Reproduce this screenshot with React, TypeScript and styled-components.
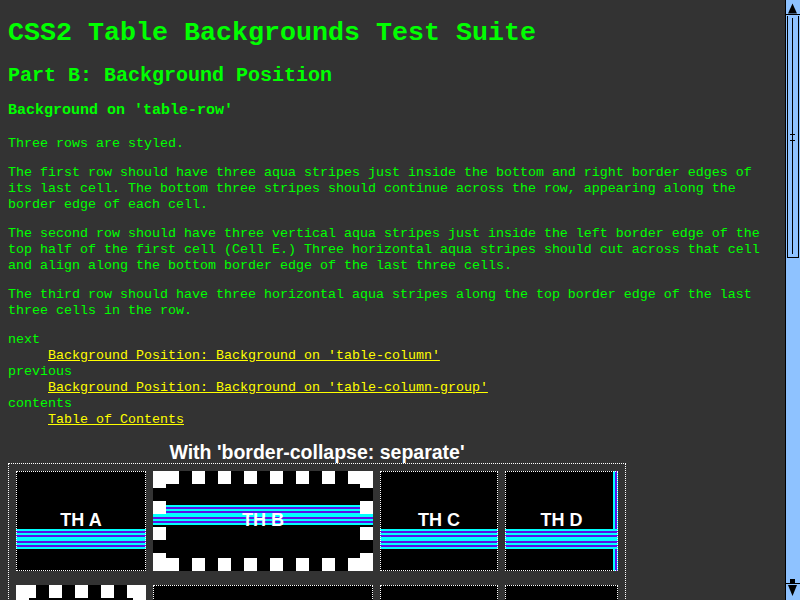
import React from 'react';
import styled, { createGlobalStyle } from 'styled-components';

const AQUA = '#00ffff';
const VIOLET = '#5c10e8';

const band = (dir: string) =>
  `linear-gradient(${dir}, ${AQUA} 0 2px, ${VIOLET} 2px 4px, ${AQUA} 4px 6px, ${VIOLET} 6px 8px, ${AQUA} 8px 12px, ${VIOLET} 12px 14px, ${AQUA} 14px 16px, ${VIOLET} 16px 18px, ${AQUA} 18px 20px)`;

type StripeKind = 'none' | 'low' | 'high' | 'corner';

const stripeLayers: Record<StripeKind, { image: string; size: string; pos: string }> = {
  none: { image: 'none', size: 'auto', pos: '0 0' },
  low: { image: band('to bottom'), size: '100% 20px', pos: '0 58px' },
  high: { image: band('to bottom'), size: '100% 20px', pos: '0 34px' },
  corner: {
    image: `${band('to bottom')}, ${band('to right')}`,
    size: '100% 20px, 20px 100%',
    pos: '0 58px, 108px 0',
  },
};

const GlobalStyle = createGlobalStyle`
  html, body {
    margin: 0;
    padding: 0;
    background: #333333;
    overflow: hidden;
  }
`;

const Screen = styled.div`
  display: flex;
  width: 800px;
  height: 600px;
  overflow: hidden;
  background: #333333;
`;

const Page = styled.main`
  flex: 1;
  min-width: 0;
  height: 600px;
  overflow: hidden;
  box-sizing: border-box;
  padding: 0 16px 0 8px;
  color: #00ff00;
  font-family: "Liberation Mono", "Courier New", monospace;
  font-size: 13.333px;
`;

const Title = styled.h1`
  font-size: 26.667px;
  line-height: 30px;
  font-weight: bold;
  margin: 18px 0 16px;
`;

const Subtitle = styled.h2`
  font-size: 20px;
  line-height: 23px;
  font-weight: bold;
  margin: 16px 0 15px;
`;

const Section = styled.h3`
  font-size: 15px;
  line-height: 18px;
  font-weight: bold;
  margin: 15px 0 15.5px;
`;

const Para = styled.p`
  line-height: 16px;
  margin: 13px 0;
`;

const Nav = styled.dl`
  line-height: 16px;
  margin: 13px 0;
`;

const NavTerm = styled.dt`
  margin: 0;
`;

const NavItem = styled.dd`
  margin: 0 0 0 40px;
`;

const Link = styled.a`
  color: #ffff00;
  text-decoration: underline;
`;

const TableBlock = styled.div`
  display: flex;
  flex-direction: column;
  width: fit-content;
`;

const Caption = styled.div`
  text-align: center;
  color: #ffffff;
  font-family: "Liberation Sans", Arial, sans-serif;
  font-weight: bold;
  font-size: 19.5px;
  line-height: 22px;
`;

const Table = styled.div`
  display: grid;
  grid-template-columns: 130px 220px 118px 113px;
  column-gap: 7px;
  row-gap: 14px;
  padding: 7px;
  border: 1px dotted #ffffff;
`;

const Cell = styled.div<{ $dotted?: boolean; $stripes: StripeKind }>`
  position: relative;
  box-sizing: border-box;
  height: 100px;
  display: flex;
  align-items: center;
  justify-content: center;
  background-color: #000000;
  border: ${(p) => (p.$dotted ? '1px dotted #ffffff' : 'none')};
  background-origin: border-box;
  background-repeat: no-repeat;
  background-image: ${(p) => stripeLayers[p.$stripes].image};
  background-size: ${(p) => stripeLayers[p.$stripes].size};
  background-position: ${(p) => stripeLayers[p.$stripes].pos};
`;

const Label = styled.span`
  position: relative;
  color: #ffffff;
  font-family: "Liberation Sans", Arial, sans-serif;
  font-weight: bold;
  font-size: 18px;
`;

const FrameSvg = styled.svg`
  position: absolute;
  inset: 0;
  pointer-events: none;
`;

type R = [number, number, number, number];

const framesB: R[] = [
  [0, 0, 26, 13], [39, 0, 13, 13], [65, 0, 13, 13], [91, 0, 13, 13], [117, 0, 13, 13],
  [143, 0, 13, 13], [169, 0, 13, 13], [195, 0, 25, 13],
  [0, 87, 26, 13], [39, 87, 13, 13], [65, 87, 13, 13], [91, 87, 13, 13], [117, 87, 13, 13],
  [143, 87, 13, 13], [169, 87, 13, 13], [195, 87, 25, 13],
  [0, 0, 13, 17], [0, 30, 13, 13], [0, 56, 13, 13], [0, 82, 13, 18],
  [207, 0, 13, 17], [207, 30, 13, 13], [207, 56, 13, 13], [207, 82, 13, 18],
];

const framesE: R[] = [
  [0, 0, 20, 13], [33, 0, 13, 13], [59, 0, 13, 13], [85, 0, 13, 13], [111, 0, 19, 13],
  [0, 87, 20, 13], [33, 87, 13, 13], [59, 87, 13, 13], [85, 87, 13, 13], [111, 87, 19, 13],
  [0, 0, 13, 17], [0, 30, 13, 13], [0, 56, 13, 13], [0, 82, 13, 18],
  [117, 0, 13, 17], [117, 30, 13, 13], [117, 56, 13, 13], [117, 82, 13, 18],
];

const SquareFrame: React.FC<{ w: number; h: number; rects: R[] }> = ({ w, h, rects }) => (
  <FrameSvg width={w} height={h} viewBox={`0 0 ${w} ${h}`} aria-hidden="true">
    {rects.map(([x, y, rw, rh], i) => (
      <rect key={i} x={x} y={y} width={rw} height={rh} fill="#ffffff" />
    ))}
  </FrameSvg>
);

/* Scrollbar */
const Scrollbar = styled.div`
  flex: none;
  width: 14px;
  height: 600px;
  border-left: 1px solid #000000;
  background: #8ec2ff;
  display: flex;
  flex-direction: column;
`;

const UpButton = styled.div`
  height: 14px;
  border-bottom: 1px solid #000000;
  display: flex;
`;

const Thumb = styled.div`
  margin: 1px 1px 0 1px;
  height: 241px;
  border: 1px solid #000000;
  border-top: none;
  display: flex;
`;

const TrackRest = styled.div`
  flex: 1;
`;

const DownButton = styled.div`
  height: 21px;
  display: flex;
`;

export default function App() {
  return (
    <>
      <GlobalStyle />
      <Screen>
        <Page>
          <Title>CSS2 Table Backgrounds Test Suite</Title>
          <Subtitle>Part B: Background Position</Subtitle>
          <Section>Background on 'table-row'</Section>
          <Para>Three rows are styled.</Para>
          <Para>
            The first row should have three aqua stripes just inside the bottom and right border edges of its
            last cell. The bottom three stripes should continue across the row, appearing along the border edge
            of each cell.
          </Para>
          <Para>
            The second row should have three vertical aqua stripes just inside the left border edge of the top
            half of the first cell (Cell E.) Three horizontal aqua stripes should cut across that cell and align
            along the bottom border edge of the last three cells.
          </Para>
          <Para>
            The third row should have three horizontal aqua stripes along the top border edge of the last three
            cells in the row.
          </Para>
          <Nav>
            <NavTerm>next</NavTerm>
            <NavItem>
              <Link href="#">Background Position: Background on 'table-column'</Link>
            </NavItem>
            <NavTerm>previous</NavTerm>
            <NavItem>
              <Link href="#">Background Position: Background on 'table-column-group'</Link>
            </NavItem>
            <NavTerm>contents</NavTerm>
            <NavItem>
              <Link href="#">Table of Contents</Link>
            </NavItem>
          </Nav>
          <TableBlock>
            <Caption>With 'border-collapse: separate'</Caption>
            <Table>
              <Cell $dotted $stripes="low">
                <Label>TH A</Label>
              </Cell>
              <Cell $stripes="high">
                <SquareFrame w={220} h={100} rects={framesB} />
                <Label>TH B</Label>
              </Cell>
              <Cell $dotted $stripes="low">
                <Label>TH C</Label>
              </Cell>
              <Cell $dotted $stripes="corner">
                <Label>TH D</Label>
              </Cell>
              <Cell $stripes="none">
                <SquareFrame w={130} h={100} rects={framesE} />
              </Cell>
              <Cell $dotted $stripes="none" />
              <Cell $dotted $stripes="none" />
              <Cell $dotted $stripes="none" />
            </Table>
          </TableBlock>
        </Page>
        <Scrollbar aria-hidden="true">
          <UpButton>
            <svg width="14" height="14" viewBox="0 0 14 14">
              <polygon points="2,13.5 11,13.5 6.5,3.5" fill="#000" />
            </svg>
          </UpButton>
          <Thumb>
            <svg width="10" height="241" viewBox="0 0 10 241">
              <rect x="4" y="2" width="1" height="236" fill="#000" />
              <rect x="2" y="118" width="5" height="1" fill="#000" />
              <rect x="2" y="124" width="5" height="1" fill="#000" />
            </svg>
          </Thumb>
          <TrackRest />
          <DownButton>
            <svg width="14" height="21" viewBox="0 0 14 21">
              <rect x="4" y="0" width="5" height="4" fill="#000" />
              <rect x="0" y="4" width="14" height="1" fill="#000" />
              <polygon points="2,6 11,6 6.5,17" fill="#000" />
            </svg>
          </DownButton>
        </Scrollbar>
      </Screen>
    </>
  );
}
